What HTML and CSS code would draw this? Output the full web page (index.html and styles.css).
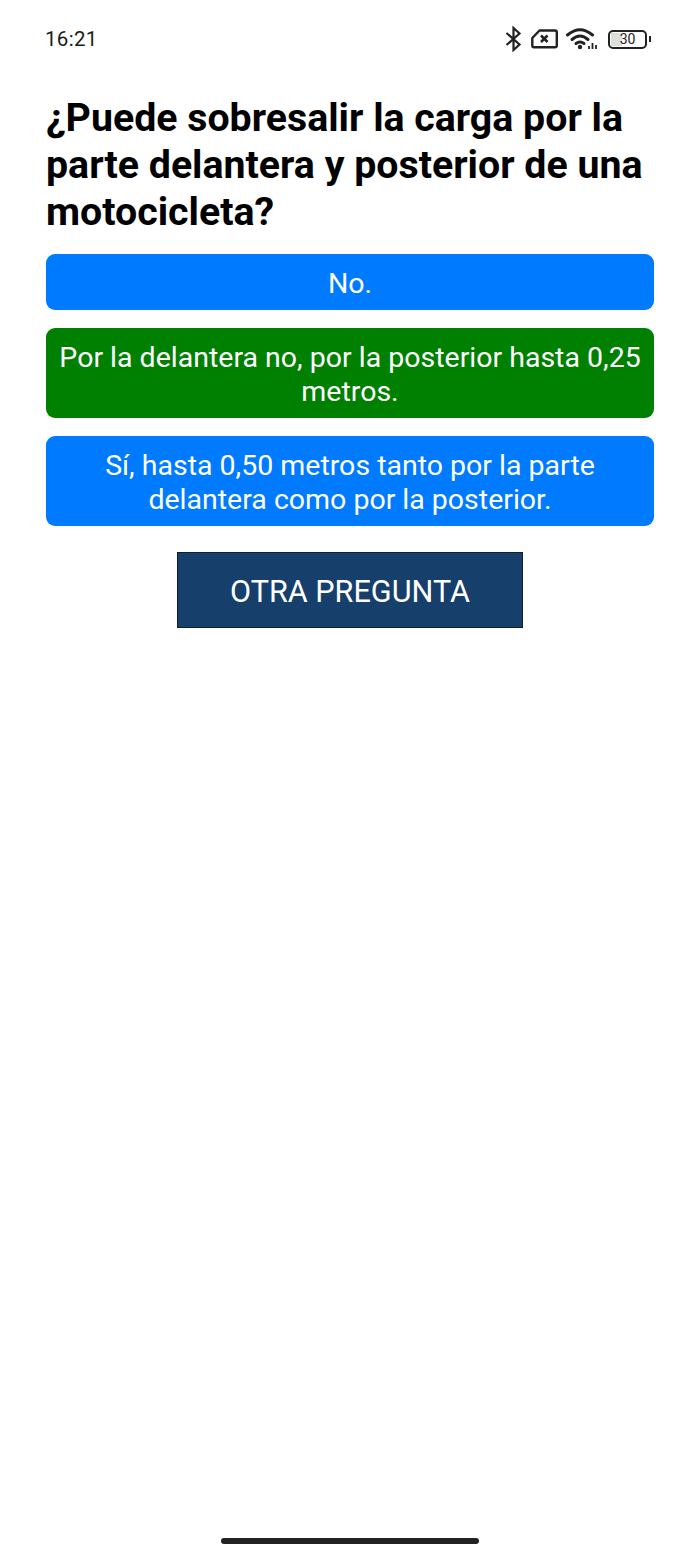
FILE: index.html
```html
<!DOCTYPE html>
<html lang="es">
<head>
<meta charset="utf-8">
<title>Pregunta</title>
<link rel="stylesheet" href="styles.css">
</head>
<body>
<div class="screen">
  <header class="status">
    <span class="time">16:21</span>
    <div class="icons">
      <svg class="i-bt" width="19" height="26" viewBox="0 0 19 26"><path d="M2.500 7 L15.500 18.500 L9.500 24 V2 L15.500 7.500 L2.500 19" fill="none" stroke="#222" stroke-width="2.200"/></svg>
      <svg class="i-sim" width="27" height="20" viewBox="0 0 27 20"><path d="M8.500 1.500 H24 Q25.800 1.500 25.800 3.300 V16.500 Q25.800 18.300 24 18.300 H3 Q1.300 18.300 1.300 16.500 V9 Z" fill="none" stroke="#222" stroke-width="2.400" stroke-linejoin="round"/><path d="M10 6.500 L16.500 13 M16.500 6.500 L10 13" stroke="#222" stroke-width="2.600"/></svg>
      <svg class="i-wifi" width="32" height="22" viewBox="0 0 32 22"><g fill="none" stroke="#222" stroke-width="3" stroke-linecap="round"><path d="M1.500 7 Q14 -3.500 26.500 7"/><path d="M6 11.500 Q14 4.500 22 11.500"/><path d="M10 15.500 Q14 12.500 18 15.500"/></g><circle cx="14" cy="19" r="2.200" fill="#222"/><path d="M23 21 V18 M26.500 21 V15 M30 21 V17" stroke="#222" stroke-width="1.800"/></svg>
      <div class="battery"><div class="cell"><div class="fill"></div><span class="pct">30</span></div><div class="nub"></div></div>
    </div>
  </header>
  <main class="content">
    <h1 class="question">¿Puede sobresalir la carga por la parte delantera y posterior de una motocicleta?</h1>
    <div class="answers">
      <button class="answer">No.</button>
      <button class="answer correct">Por la delantera no, por la posterior hasta 0,25 metros.</button>
      <button class="answer">Sí, hasta 0,50 metros tanto por la parte delantera como por la posterior.</button>
    </div>
    <button class="next">OTRA PREGUNTA</button>
  </main>
  <div class="home-bar"></div>
</div>
</body>
</html>
```
FILE: styles.css
```css
* { box-sizing: border-box; }
html, body { margin: 0; padding: 0; background: #fff; }
.screen {
  width: 700px;
  height: 1556px;
  display: flex;
  flex-direction: column;
  font-family: Roboto, "Liberation Sans", sans-serif;
  color: #000;
}
.status {
  height: 78px;
  flex: none;
  padding: 0 49px 0 45px;
  display: flex;
  justify-content: space-between;
  align-items: center;
}
.time { font-size: 20.500px; color: #1a1a1a; letter-spacing: 0.3px; }
.icons { display: flex; align-items: center; gap: 8px; }
.battery { display: flex; align-items: center; margin-left: 2px; }
.cell {
  position: relative;
  width: 39px;
  height: 19px;
  border: 2px solid #222;
  border-radius: 5px;
  display: flex;
  align-items: center;
  justify-content: center;
}
.fill { position: absolute; left: 1px; top: 1px; bottom: 1px; width: 11px; background: #ddd; }
.pct { position: relative; font-size: 14px; line-height: 14px; color: #222; }
.nub { width: 2px; height: 6px; background: #222; margin-left: 2px; }
.content {
  flex: 1;
  padding: 17px 46px 0;
  display: flex;
  flex-direction: column;
}
.question {
  margin: 0;
  font-size: 39.300px;
  line-height: 47px;
  font-weight: 700;
}
.answers {
  display: flex;
  flex-direction: column;
  gap: 18px;
  margin-top: 18px;
}
.answer {
  border: 0;
  border-radius: 9px;
  background: #007bff;
  color: #fff;
  font: 400 28.500px/34px Roboto, "Liberation Sans", sans-serif;
  padding: 13px 10px 9px;
  text-align: center;
}
.correct { background: #008000; }
.next {
  align-self: center;
  width: 346px;
  height: 76px;
  margin-top: 26px;
  padding: 2px 0 0;
  background: #163f6c;
  border: 1px solid #0d1f33;
  color: #fff;
  font: 400 30.600px Roboto, "Liberation Sans", sans-serif;
}
.home-bar {
  flex: none;
  width: 258px;
  height: 6px;
  margin: 0 auto 12px;
  border-radius: 3px;
  background: #222;
}
```
